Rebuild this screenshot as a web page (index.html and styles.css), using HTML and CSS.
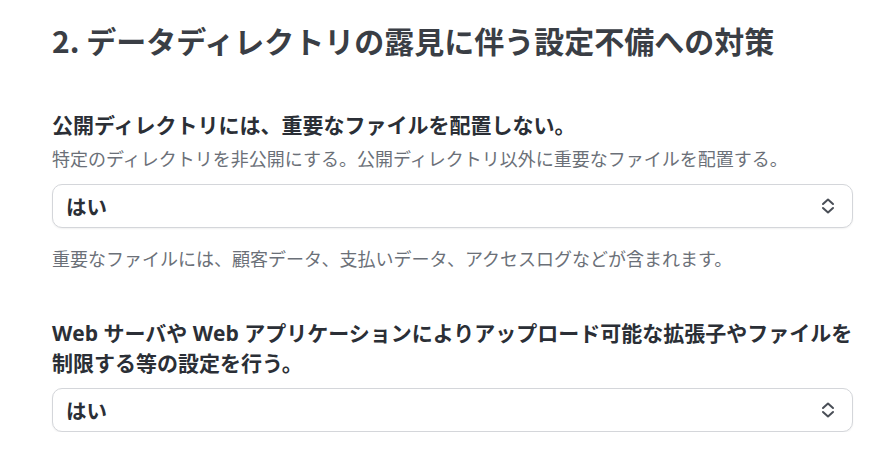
FILE: index.html
```html
<!DOCTYPE html>
<html lang="ja">
<head>
<meta charset="utf-8">
<title>設定</title>
<link rel="stylesheet" href="styles.css">
</head>
<body>
<main class="page">
  <h1 class="title">2. データディレクトリの露見に伴う設定不備への対策</h1>

  <section class="field field-first">
    <label class="label">公開ディレクトリには、重要なファイルを配置しない。</label>
    <p class="desc">特定のディレクトリを非公開にする。公開ディレクトリ以外に重要なファイルを配置する。</p>
    <div class="select">
      <span class="select-value">はい</span>
      <svg class="chevron" width="14" height="16" viewBox="0 0 14 16" fill="none" stroke="currentColor" stroke-width="2" stroke-linecap="round" stroke-linejoin="round"><path d="M2 6 L7 1.5 L12 6"/><path d="M2 10 L7 14.5 L12 10"/></svg>
    </div>
    <p class="help">重要なファイルには、顧客データ、支払いデータ、アクセスログなどが含まれます。</p>
  </section>

  <section class="field field-second">
    <label class="label">Web サーバや Web アプリケーションによりアップロード可能な拡張子やファイルを制限する等の設定を行う。</label>
    <div class="select select-tight">
      <span class="select-value">はい</span>
      <svg class="chevron" width="14" height="16" viewBox="0 0 14 16" fill="none" stroke="currentColor" stroke-width="2" stroke-linecap="round" stroke-linejoin="round"><path d="M2 6 L7 1.5 L12 6"/><path d="M2 10 L7 14.5 L12 10"/></svg>
    </div>
  </section>
</main>
</body>
</html>
```

FILE: styles.css
```css
* { box-sizing: border-box; }
html, body { margin: 0; padding: 0; background: #ffffff; }
body {
  font-family: "Noto Sans CJK JP", "Noto Sans", sans-serif;
  color: #2f343b;
}
.page {
  width: 882px;
  padding: 22px 29px 0 52px;
}
.title {
  margin: 0;
  font-size: 30px;
  line-height: 36px;
  font-weight: 700;
  color: #3a3e45;
  letter-spacing: 0;
}
.field { display: flex; flex-direction: column; }
.field-first { margin-top: 52px; }
.field-second { margin-top: 47px; }
.label {
  display: block;
  font-family: "Open Sans", "Noto Sans CJK JP", sans-serif;
  font-size: 21px;
  line-height: 30px;
  font-weight: 700;
  color: #2b2f36;
}
.desc, .help {
  margin: 0;
  font-size: 18px;
  line-height: 26px;
  color: #6b7078;
}
.desc { margin-top: 5px; }
.select {
  margin-top: 13px;
  height: 44px;
  border: 1px solid #d4d6da;
  border-radius: 10px;
  box-shadow: 0 1px 2px rgba(0,0,0,0.06);
  display: flex;
  align-items: center;
  justify-content: space-between;
  padding: 0 17px 0 13px;
  background: #fff;
}
.select-tight { margin-top: 10px; }
.select-value {
  font-size: 20.5px;
  font-weight: 700;
  color: #2b2f36;
}
.chevron { color: #4a4f57; }
.help { margin-top: 17px; }
```
